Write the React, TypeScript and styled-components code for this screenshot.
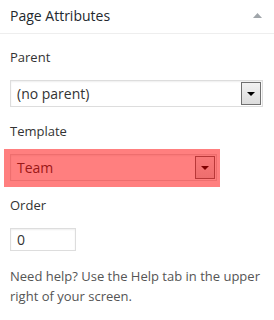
import React from "react";
import styled, { createGlobalStyle } from "styled-components";

const GlobalStyle = createGlobalStyle`
  body {
    margin: 0;
    background: #fff;
    font-family: "Open Sans", "Liberation Sans", sans-serif;
    color: #444;
  }
`;

export default function App() {
  return (
    <>
      <GlobalStyle />
      <StyledBox>
        <div className="header">
          <h3 className="title">Page Attributes</h3>
          <svg className="toggle" width="9" height="5" viewBox="0 0 9 5">
            <path d="M4.5 0 L9 5 L0 5 Z" fill="#a0a5aa" />
          </svg>
        </div>

        <div className="inside">
          <Label>Parent</Label>
          <Select $width="100%">
            <span className="value">(no parent)</span>
            <DropButton />
          </Select>

          <Label>Template</Label>
          <Highlight>
            <Select $width="207px">
              <span className="value">Team</span>
              <DropButton />
            </Select>
          </Highlight>

          <Label>Order</Label>
          <NumberInput>0</NumberInput>

          <Help>Need help? Use the Help tab in the upper right of your screen.</Help>
        </div>
      </StyledBox>
    </>
  );
}

const DropButton: React.FC = () => (
  <StyledButton>
    <svg width="8" height="4" viewBox="0 0 8 4">
      <path d="M0 0 L8 0 L4 4 Z" fill="#000" />
    </svg>
  </StyledButton>
);

const StyledBox = styled.div`
  width: 274px;

  .header {
    height: 33px;
    padding: 0 12px 0 10px;
    border-bottom: 1px solid #eee;
    display: flex;
    align-items: flex-start;
    justify-content: space-between;
  }

  .title {
    margin: 6px 0 0;
    font-size: 14px;
    line-height: 19px;
    font-weight: 400;
    color: #23282d;
  }

  .toggle {
    margin-top: 13px;
  }

  .inside {
    padding: 14px 11px 0 10px;
  }
`;

const Label = styled.p`
  margin: 0 0 14px;
  font-size: 13px;
  line-height: 18px;
  color: #333;
`;

const Select = styled.div<{ $width: string }>`
  width: ${(p) => p.$width};
  height: 27px;
  box-sizing: border-box;
  margin-bottom: 15px;
  padding: 1px 1px 1px 6px;
  border: 1px solid #ddd;
  box-shadow: inset 0 1px 2px rgba(0, 0, 0, 0.07);
  background: #fff;
  display: flex;
  align-items: center;
  justify-content: space-between;

  .value {
    font-size: 14px;
    color: #333;
  }
`;

const StyledButton = styled.div`
  width: 20px;
  height: 100%;
  box-sizing: border-box;
  border: 1px solid #707070;
  background: linear-gradient(#f2f2f2, #dcdcdc);
  display: flex;
  align-items: center;
  justify-content: center;
`;

// red marker drawn over the template select
const Highlight = styled.div`
  position: relative;

  &::after {
    content: "";
    position: absolute;
    top: -5px;
    left: -6px;
    width: 216px;
    height: 38px;
    background: rgba(255, 0, 0, 0.5);
  }
`;

const NumberInput = styled.div`
  width: 66px;
  height: 23px;
  box-sizing: border-box;
  margin-bottom: 15px;
  padding: 0 6px;
  border: 1px solid #ddd;
  box-shadow: inset 0 1px 2px rgba(0, 0, 0, 0.07);
  font-size: 14px;
  line-height: 21px;
  color: #333;
`;

const Help = styled.p`
  margin: 0;
  font-size: 13px;
  line-height: 20px;
  color: #555;
`;
